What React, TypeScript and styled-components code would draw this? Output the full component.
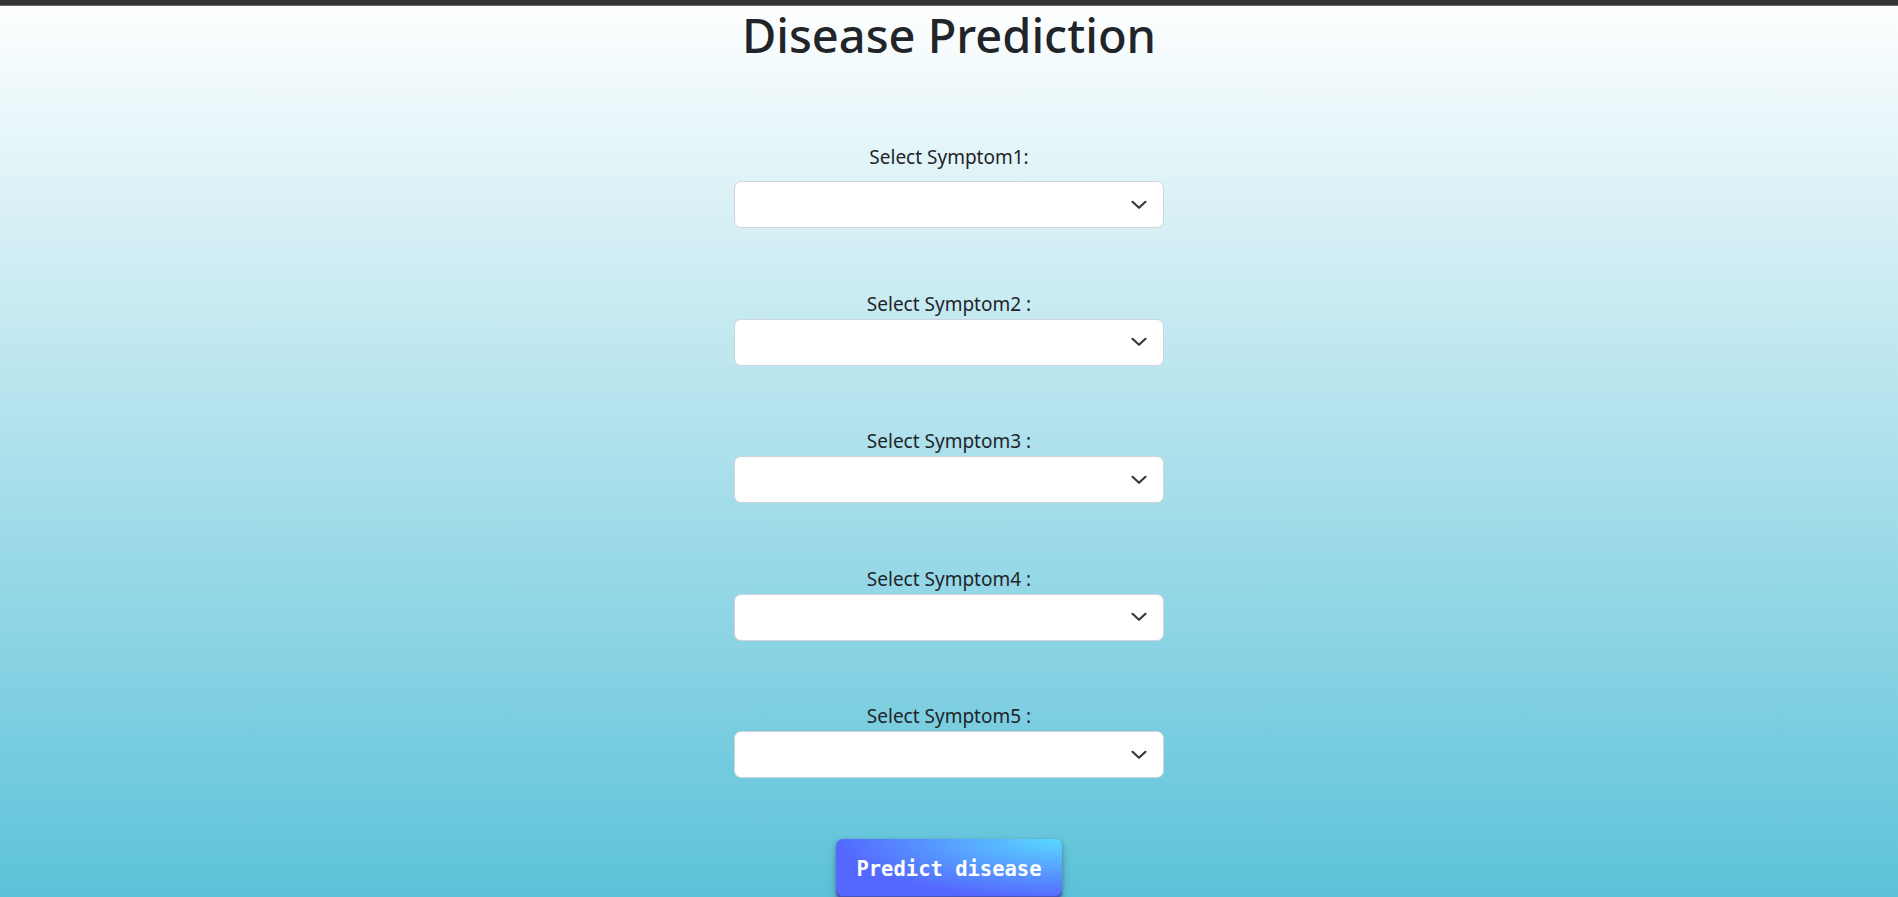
import React from "react";
import styled, { createGlobalStyle } from "styled-components";

const GlobalStyle = createGlobalStyle`
  html, body { margin: 0; padding: 0; }
  body {
    font-family: "Noto Sans", "Open Sans", sans-serif;
    color: #212529;
    overflow: hidden;
  }
`;

const Page = styled.div`
  min-height: 100vh;
  background: linear-gradient(to bottom, #ffffff 0px, #5cc2d9 897px);
  display: flex;
  flex-direction: column;
  align-items: center;
`;

const TopBar = styled.div`
  align-self: stretch;
  height: 5px;
  background: #333333;
  border-bottom: 1px solid #6a6a6a;
`;

const Title = styled.h1`
  margin: 0;
  font-family: "Noto Sans", sans-serif;
  font-size: 47px;
  font-weight: 500;
  line-height: 58px;
  color: #212529;
  text-align: center;
`;

const Form = styled.form`
  width: 430px;
  margin-top: 78px;
  display: flex;
  flex-direction: column;
  align-items: stretch;
  gap: 60.6px;
`;

const Field = styled.div`
  display: flex;
  flex-direction: column;
`;

const Label = styled.label<{ $spaced?: boolean }>`
  text-align: center;
  font-size: 19px;
  line-height: 30px;
  color: #212529;
  margin-bottom: ${(p) => (p.$spaced ? "9px" : "0")};
`;

const SelectWrap = styled.div`
  position: relative;
  height: 47px;
`;

const Select = styled.select`
  appearance: none;
  -webkit-appearance: none;
  width: 100%;
  height: 47px;
  box-sizing: border-box;
  background: #ffffff;
  border: 1px solid #ced4da;
  border-radius: 7px;
  font-family: inherit;
  font-size: 20px;
  padding: 0 48px 0 15px;
  color: #212529;
  outline: none;
`;

const Chevron = styled.svg`
  position: absolute;
  right: 17px;
  top: 50%;
  transform: translateY(-50%);
  pointer-events: none;
`;

const ButtonRow = styled.div`
  display: flex;
  justify-content: center;
  margin-top: 61px;
`;

const PredictButton = styled.button`
  height: 60px;
  padding: 0 20px;
  border: 0;
  border-radius: 7px;
  background-image: radial-gradient(100% 100% at 100% 0, #5adaff 0, #5468ff 100%);
  box-shadow: rgba(45, 35, 66, 0.4) 0 2px 4px,
    rgba(45, 35, 66, 0.3) 0 7px 13px -3px,
    rgba(58, 65, 111, 0.5) 0 -3px 0 inset;
  color: #ffffff;
  font-family: "DejaVu Sans Mono", "Liberation Mono", monospace;
  font-size: 20.5px;
  font-weight: 700;
  cursor: pointer;
`;

const ChevronIcon = () => (
  <Chevron width="16" height="9" viewBox="0 0 16 9" fill="none">
    <path d="M1.5 1.2 8 7.3 14.5 1.2" stroke="#343a40" strokeWidth="2.2" strokeLinecap="round" strokeLinejoin="round" />
  </Chevron>
);

const labels = [
  "Select Symptom1:",
  "Select Symptom2 :",
  "Select Symptom3 :",
  "Select Symptom4 :",
  "Select Symptom5 :",
];

export default function App() {
  return (
    <>
      <GlobalStyle />
      <Page>
        <TopBar />
        <Title>Disease Prediction</Title>
        <Form onSubmit={(e) => e.preventDefault()}>
          {labels.map((l, i) => (
            <Field key={l}>
              <Label $spaced={i === 0} htmlFor={`s${i}`}>{l}</Label>
              <SelectWrap>
                <Select id={`s${i}`} defaultValue="">
                  <option value=""></option>
                </Select>
                <ChevronIcon />
              </SelectWrap>
            </Field>
          ))}
        </Form>
        <ButtonRow>
          <PredictButton type="button">Predict disease</PredictButton>
        </ButtonRow>
      </Page>
    </>
  );
}
